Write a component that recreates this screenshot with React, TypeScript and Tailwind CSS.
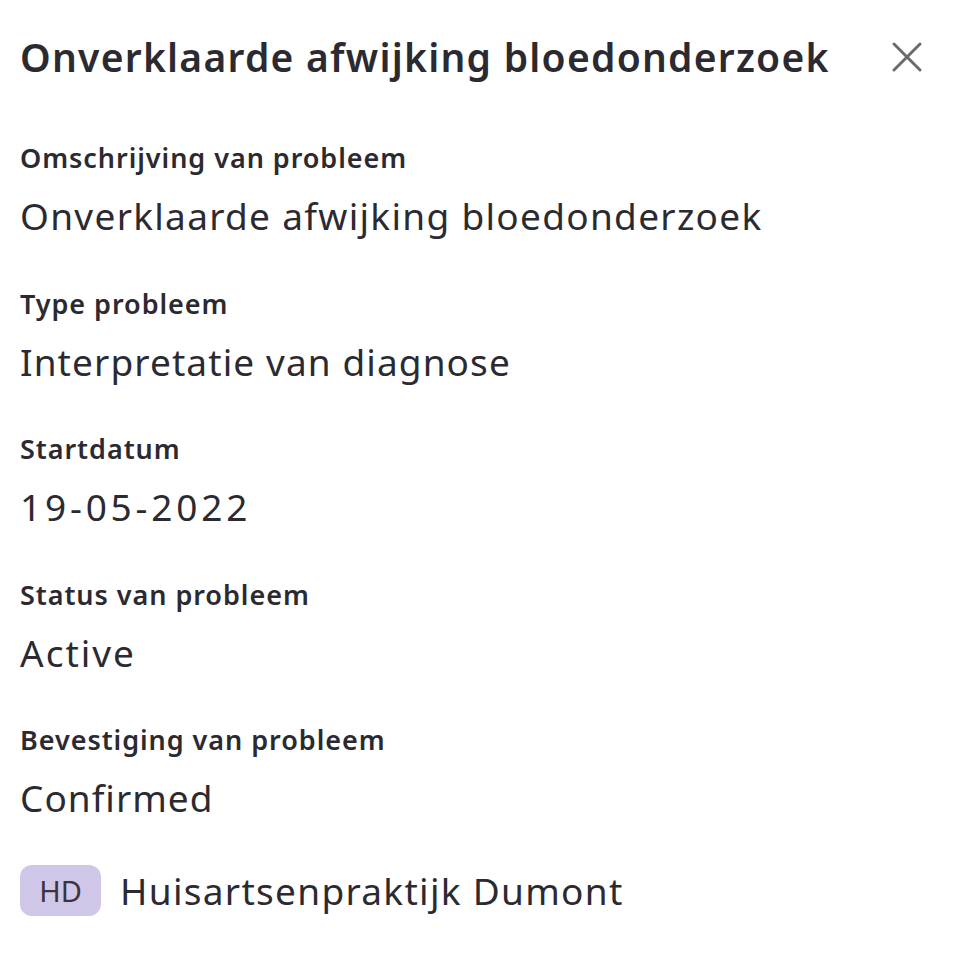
import React from "react";

const fields = [
  { label: "Omschrijving van probleem", value: "Onverklaarde afwijking bloedonderzoek", track: "tracking-[1.3px]" },
  { label: "Type probleem", value: "Interpretatie van diagnose", track: "tracking-[1.1px]" },
  { label: "Startdatum", value: "19-05-2022", track: "tracking-[3.8px]" },
  { label: "Status van probleem", value: "Active", track: "tracking-[2px]" },
  { label: "Bevestiging van probleem", value: "Confirmed", track: "tracking-[1px]" },
];

export default function App() {
  return (
    <div
      className="w-[964px] h-[978px] bg-white text-[#2c2a31] px-[20px]"
      style={{ fontFamily: "'Noto Sans', sans-serif" }}
    >
      <div className="flex items-center justify-between pt-[28px]">
        <h1 className="text-[39px] leading-[58px] font-semibold tracking-[1.25px]">
          Onverklaarde afwijking bloedonderzoek
        </h1>
        <button className="w-[44px] h-[44px] mr-[15px] flex items-center justify-center text-[#6b6b6b]">
          <svg width="30" height="30" viewBox="0 0 30 30" fill="none" stroke="currentColor" strokeWidth="3" strokeLinecap="round">
            <path d="M2 2 L28 28 M28 2 L2 28" />
          </svg>
        </button>
      </div>
      <div className="flex flex-col mt-[55px]">
        {fields.map((f) => (
          <div key={f.label} className="flex flex-col h-[145.5px]">
            <div className="text-[27px] leading-[34px] font-semibold tracking-[0.95px]">{f.label}</div>
            <div className={`text-[37px] leading-[50px] mt-[16px] ${f.track}`}>{f.value}</div>
          </div>
        ))}
      </div>
      <div className="flex items-center gap-[19px] -mt-[6px]">
        <div className="w-[81px] h-[51px] rounded-[12px] bg-[#d0c6e8] flex items-center justify-center text-[29px] text-[#3a3340]">
          HD
        </div>
        <div className="text-[37px] tracking-[1.3px]">Huisartsenpraktijk Dumont</div>
      </div>
    </div>
  );
}
